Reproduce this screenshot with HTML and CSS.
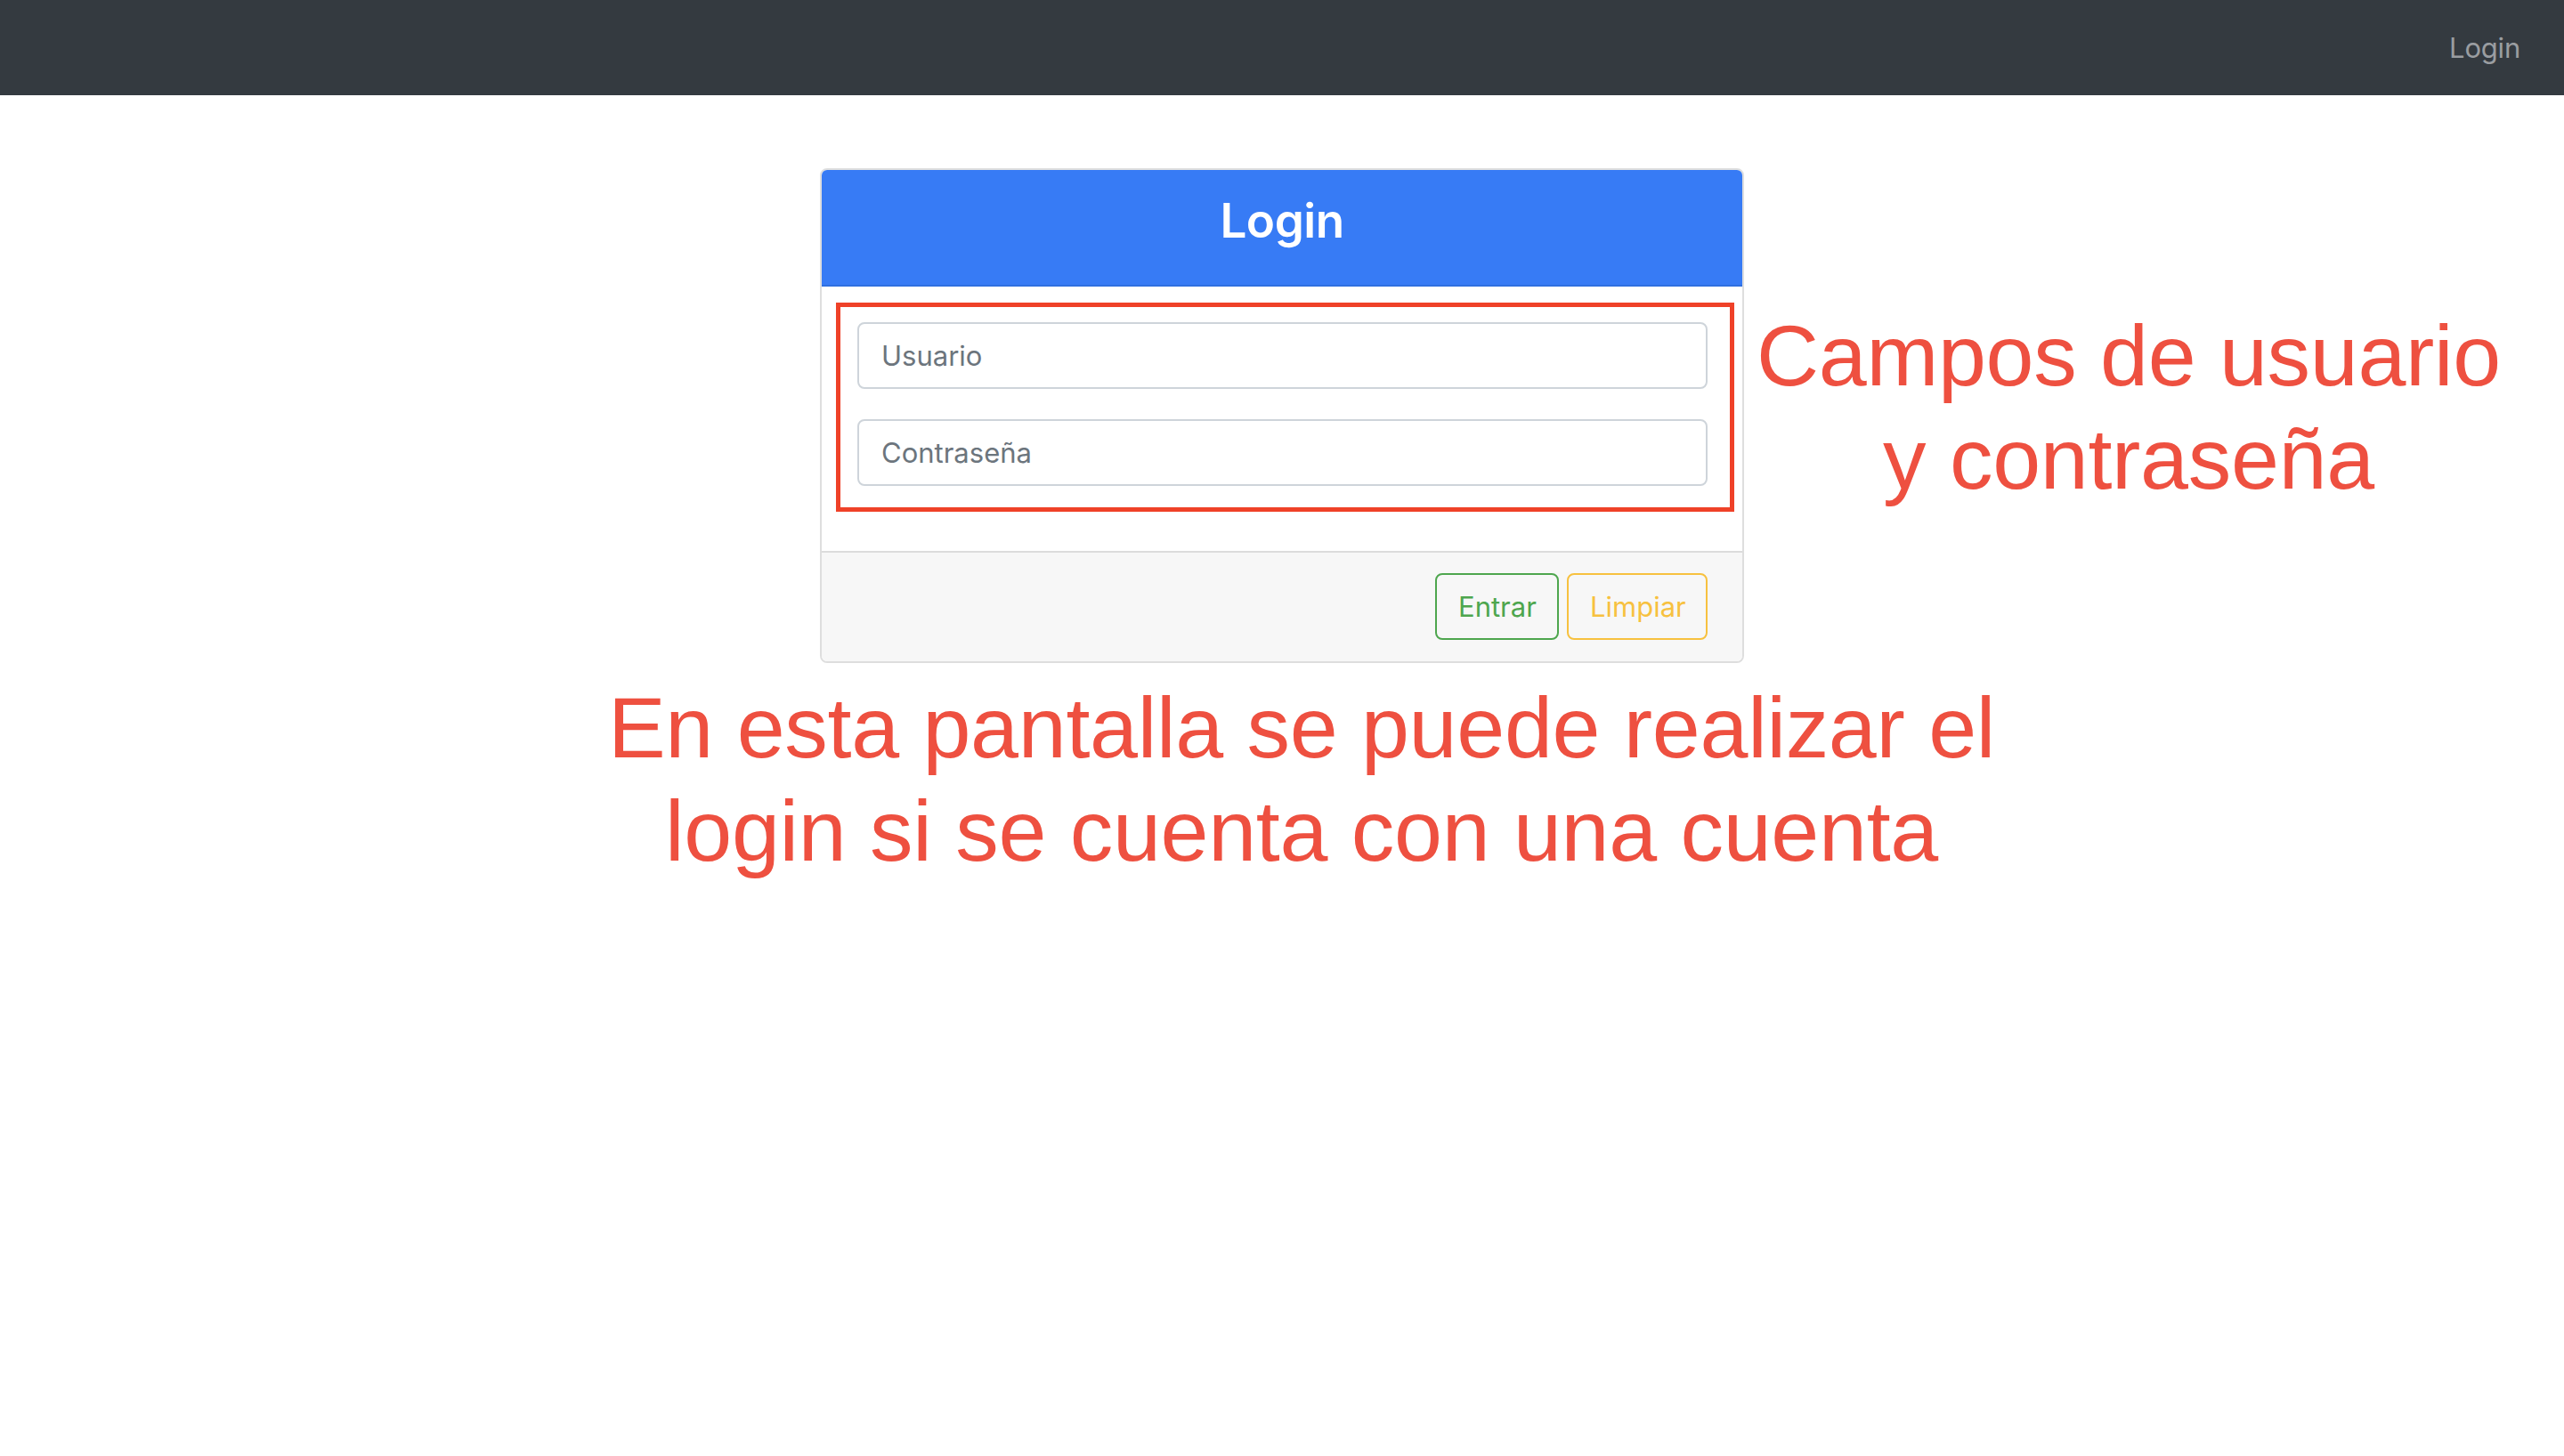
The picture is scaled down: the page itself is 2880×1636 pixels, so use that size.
FILE: index.html
```html
<!DOCTYPE html>
<html lang="es">
<head>
<meta charset="utf-8">
<title>Login</title>
<link rel="stylesheet" href="styles.css">
</head>
<body>
<nav class="navbar">
  <a class="nav-link" href="#">Login</a>
</nav>
<main class="page">
  <section class="card">
    <header class="card-header">
      <h3 class="card-title">Login</h3>
    </header>
    <div class="card-body">
      <div class="field"><input class="input" type="text" placeholder="Usuario"></div>
      <div class="field"><input class="input" type="password" placeholder="Contraseña"></div>
      <div class="mark-box"></div>
    </div>
    <footer class="card-footer">
      <button class="btn btn-success" type="button">Entrar</button>
      <button class="btn btn-warning" type="button">Limpiar</button>
    </footer>
  </section>
  <p class="note note-side">Campos de usuario<br>y contraseña</p>
  <p class="note note-bottom">En esta pantalla se puede realizar el<br>login si se cuenta con una cuenta</p>
</main>
</body>
</html>
```
FILE: styles.css
```css
html, body {
  margin: 0;
  padding: 0;
  background: #ffffff;
}

body {
  font-family: Inter, "Noto Sans", sans-serif;
  width: 2880px;
  height: 1636px;
  overflow: hidden;
}

.navbar {
  height: 107px;
  background: #343a40;
  display: flex;
  align-items: center;
  justify-content: flex-end;
  padding: 0 49px 0 0;
  box-sizing: border-box;
}

.nav-link {
  color: #9a9da1;
  font-size: 31px;
  text-decoration: none;
  letter-spacing: -0.2px;
}

.page {
  display: grid;
  grid-template-columns: 1fr 1038px 1fr;
  align-items: start;
}

.card {
  grid-column: 2;
  grid-row: 1;
  margin-top: 82px;
  border: 2px solid #dedede;
  border-radius: 8px;
  overflow: hidden;
  background: #ffffff;
}

.card-header {
  height: 131px;
  box-sizing: border-box;
  background: #377bf5;
  border-bottom: 2px solid #2f6fe0;
  display: flex;
  align-items: center;
  justify-content: center;
  padding-bottom: 16px;
}

.card-title {
  margin: 0;
  color: #ffffff;
  font-size: 53px;
  font-weight: 600;
  letter-spacing: -0.5px;
}

.card-body {
  position: relative;
  padding: 40px 39px 39px 40px;
}

.field {
  margin-bottom: 34px;
}

.input {
  display: block;
  width: 100%;
  height: 75px;
  box-sizing: border-box;
  border: 2px solid #ced4da;
  border-radius: 8px;
  padding: 0 25px;
  font-family: Inter, "Noto Sans", sans-serif;
  font-size: 31px;
  color: #495057;
  background: #ffffff;
  outline: none;
}

.input::placeholder {
  color: #6c757d;
  opacity: 1;
}

.mark-box {
  position: absolute;
  left: 16px;
  top: 18px;
  width: 1009px;
  height: 235px;
  box-sizing: border-box;
  border: 5px solid #ef4128;
  pointer-events: none;
}

.card-footer {
  display: flex;
  justify-content: flex-end;
  gap: 9px;
  background: #f7f7f7;
  border-top: 2px solid #dcdcdc;
  padding: 23px 39px 24px 40px;
}

.btn {
  height: 75px;
  box-sizing: border-box;
  border-radius: 8px;
  border: 2px solid;
  background: transparent;
  font-family: Inter, "Noto Sans", sans-serif;
  font-size: 31px;
  padding: 0 24px;
  cursor: pointer;
}

.btn-success {
  width: 139px;
  color: #4ea64e;
  border-color: #4ea64e;
}

.btn-warning {
  width: 158px;
  color: #f7c13f;
  border-color: #f7c13f;
}

.note {
  margin: 0;
  color: #ee5040;
  font-family: "Liberation Sans", Arial, sans-serif;
  font-size: 97px;
  line-height: 116px;
  letter-spacing: -0.3px;
  text-align: center;
}

.note-side {
  grid-column: 3;
  grid-row: 1;
  width: 864px;
  margin-top: 235px;
}

.note-bottom {
  grid-column: 1 / 4;
  grid-row: 2;
  margin-top: 15px;
  padding-left: 44px;
}
```
